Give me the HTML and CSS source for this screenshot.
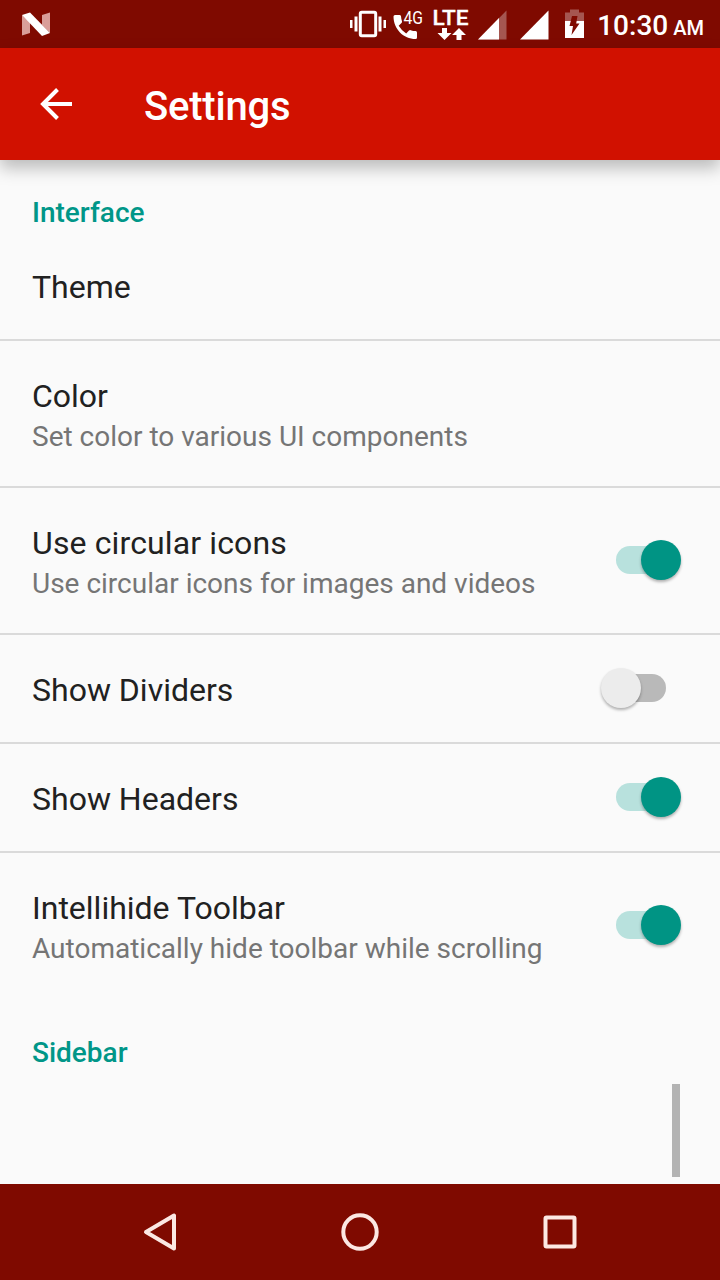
FILE: index.html
```html
<!DOCTYPE html>
<html lang="en">
<head>
<meta charset="utf-8">
<title>Settings</title>
<link rel="stylesheet" href="styles.css">
</head>
<body>
<div class="screen">
  <header class="status">
    <svg class="nougat" width="28" height="24" viewBox="0 0 28 24"><path class="faded" d="M0 3L8 10V21L0 23.500zM20 3L28 .5V21L20 13z"/><path class="solid" d="M0 3L8 .5L28 21L20 24z"/></svg>
    <div class="status-icons">
      <svg class="vibrate" width="36" height="48" viewBox="0 0 36 48"><rect x="10.300" y="12.300" width="15.400" height="23.400" rx="1.500" fill="none" stroke="#fff" stroke-width="3"/><path class="solid" d="M0 20h2.500v8H0zM4.500 16.500h3v15h-3zM28.500 16.500h3v15h-3zM33.500 20H36v8h-2.500z"/></svg>
      <svg class="phone" width="32" height="48" viewBox="0 0 32 48"><path class="solid" d="M2 15H6.500Q7.700 15 8 16.300Q8.200 19 9 21.300Q9.200 22.300 8.500 23L5.700 25.800Q8.500 30.600 13.200 33.400L16 30.600Q16.700 29.900 17.700 30.200Q20 31 22.600 31.100Q24 31.300 24 32.600V37.500Q24 39 22.600 39C10.500 39 .5 29 .5 16.500Q.5 15 2 15z"/><text class="four-g" x="10.500" y="24" textLength="19.500" lengthAdjust="spacingAndGlyphs">4G</text></svg>
      <svg class="lte" width="36" height="48" viewBox="0 0 36 48"><text class="lte-text" x="-.5" y="25" textLength="36" lengthAdjust="spacingAndGlyphs">LTE</text><path class="solid" d="M9 28h5v5h4.500l-7 7-7-7H9zM23.500 40v-5H19l7-7 7 7h-4.500v5z"/></svg>
      <svg class="signal-one" width="29" height="48" viewBox="0 0 29 48"><path class="weak" d="M0 39.500L28.500 10.500V39.500z"/><path class="solid" d="M0 39.500L21 18.100V39.500z"/></svg>
      <svg class="signal-two" width="29" height="48" viewBox="0 0 29 48"><path class="solid" d="M0 39.500L28.500 10.500V39.500z"/></svg>
      <svg class="battery" width="19" height="48" viewBox="0 0 19 48"><path class="weak" d="M5 9.500h9V12.500h5V21H0v-8.500h5z"/><path class="solid" d="M0 21h19v17H0z"/><path fill="#7f0a00" d="M7 16h5.500l-1.300 7.500H14.500L6.500 35l1.500-9H4.500z"/></svg>
    </div>
    <div class="clock">10:30<span class="meridiem">AM</span></div>
  </header>
  <div class="toolbar">
    <svg class="back" width="32" height="32" viewBox="0 0 32 32"><path d="M32 16H3M17.500 1.500L3 16L17.500 30.500" fill="none" stroke="#fff" stroke-width="4"/></svg>
    <h1 class="title">Settings</h1>
  </div>
  <main class="content">
    <h2 class="category">Interface</h2>
    <section class="row"><div class="label"><div class="name">Theme</div></div></section>
    <section class="row tall"><div class="label"><div class="name">Color</div><div class="summary">Set color to various UI components</div></div></section>
    <section class="row tall"><div class="label"><div class="name spaced">Use circular icons</div><div class="summary">Use circular icons for images and videos</div></div><div class="switch on"><div class="thumb"></div></div></section>
    <section class="row"><div class="label"><div class="name">Show Dividers</div></div><div class="switch"><div class="thumb"></div></div></section>
    <section class="row"><div class="label"><div class="name">Show Headers</div></div><div class="switch on"><div class="thumb"></div></div></section>
    <section class="row tall last"><div class="label"><div class="name">Intellihide Toolbar</div><div class="summary">Automatically hide toolbar while scrolling</div></div><div class="switch on"><div class="thumb"></div></div></section>
    <h2 class="category">Sidebar</h2>
    <div class="scrollbar"></div>
  </main>
  <nav class="navbar">
    <svg width="40" height="40" viewBox="0 0 40 40"><path d="M34 3.500V36.500L6 20z"/></svg>
    <svg width="40" height="40" viewBox="0 0 40 40"><circle cx="20" cy="20" r="16.700"/></svg>
    <svg width="40" height="40" viewBox="0 0 40 40"><rect x="5.500" y="5.500" width="29" height="29" rx="1"/></svg>
  </nav>
</div>
</body>
</html>
```
FILE: styles.css
```css
* { box-sizing: border-box; }
body { margin: 0; font-family: Roboto, "Liberation Sans", sans-serif; background: #fafafa; }
.screen { width: 720px; height: 1280px; display: flex; flex-direction: column; overflow: hidden; }
svg { display: block; flex: none; }

.status { height: 48px; flex: none; display: flex; background: #7f0a00; color: #fff; padding: 0 16px 0 22px; }
.solid { fill: #fff; }
.faded { fill: #d99e99; }
.weak { fill: #a55650; }
.nougat { margin-top: 12px; }
.status-icons { display: flex; margin-left: 300px; }
.phone { margin-left: 7px; }
.lte { margin-left: 8px; }
.signal-one { margin-left: 9px; }
.signal-two { margin-left: 13px; }
.battery { margin-left: 16px; }
.four-g { font-size: 18px; fill: #fff; }
.lte-text { font-size: 21px; font-weight: 500; fill: #fff; stroke: #fff; stroke-width: .3px; }
.clock { margin-left: auto; font-size: 28px; font-weight: 500; line-height: 52px; white-space: nowrap; }
.meridiem { font-size: 20px; margin-left: 5px; }

.toolbar { height: 112px; flex: none; display: flex; align-items: center; background: #d11100; color: #fff; padding-left: 40px; position: relative; z-index: 1; box-shadow: 0 8px 16px rgba(0, 0, 0, .26); }
.title { margin: 5px 0 0 72px; font-size: 40px; font-weight: 500; line-height: 48px; letter-spacing: -.2px; }

.content { flex: 1; position: relative; }
.category { margin: 0; padding: 36px 32px 0; height: 72px; font-size: 28px; line-height: 33px; font-weight: 500; color: #009688; }
.row { height: 109px; padding: 36px 39px 0 32px; border-bottom: 2px solid #dadada; display: flex; justify-content: space-between; }
.tall { height: 147px; }
.last { border-bottom: 0; }
.name { font-size: 32px; line-height: 38px; color: #212121; }
.spaced { letter-spacing: .13px; }
.summary { margin-top: 5px; font-size: 28px; line-height: 33px; color: #757575; }
.switch { width: 80px; height: 40px; margin-top: -3px; display: flex; align-items: center; position: relative; }
.tall .switch { margin-top: 16px; }
.switch::before { content: ""; position: absolute; left: 15px; top: 6px; width: 50px; height: 28px; border-radius: 14px; background: #b9b9b9; }
.thumb { position: relative; width: 40px; height: 40px; border-radius: 50%; background: #ececec; box-shadow: 0 2px 3px rgba(0, 0, 0, .3); }
.on { justify-content: flex-end; }
.on::before { background: #b8e1dd; }
.on .thumb { background: #009484; }
.scrollbar { position: absolute; right: 40px; top: 924px; width: 8px; height: 93px; background: #b3b3b3; }

.navbar { height: 96px; flex: none; display: flex; justify-content: space-between; align-items: center; background: #7f0a00; padding: 0 140px; }
.navbar svg { fill: none; stroke: #fce8e3; stroke-width: 4; stroke-linejoin: round; }
```
